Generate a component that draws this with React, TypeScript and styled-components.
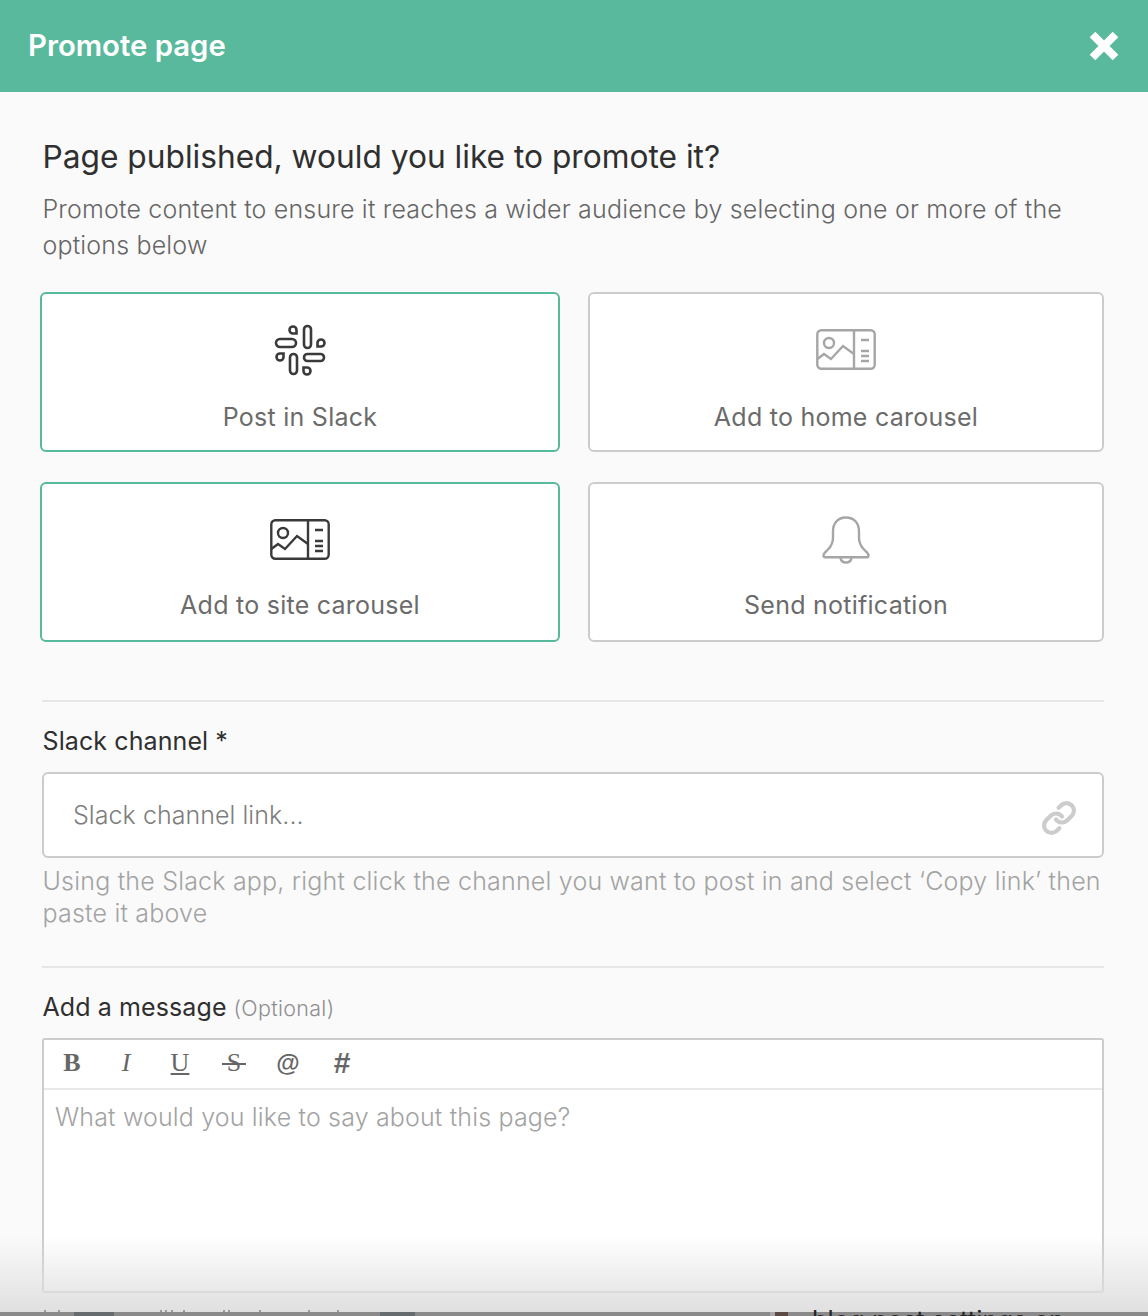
import React from 'react'
import styled, { createGlobalStyle } from 'styled-components'
import { Link } from 'lucide-react'

const GlobalStyle = createGlobalStyle`
	* {
		box-sizing: border-box;
	}

	html,
	body {
		margin: 0;
		padding: 0;
		background: #fafafa;
		font-family: Inter, 'Noto Sans', sans-serif;
	}
`

const theme = {
	green: '#59b99c',
	border: '#cccccc',
	textDark: '#2f2f2f',
	textMid: '#666666',
	textLight: '#a3a3a3',
}

// CSS

const Modal = styled.div`
	position: relative;
	width: 1148px;
	height: 1316px;
	overflow: hidden;
	background: #fafafa;
`

const Header = styled.header`
	height: 92px;
	background: ${theme.green};
	display: flex;
	align-items: center;
	justify-content: space-between;
	padding: 0 29px 0 28px;
`

const HeaderTitle = styled.h1`
	margin: 0 0 1px;
	font-size: 29.3px;
	font-weight: 600;
	color: #fff;
`

const CloseButton = styled.button`
	display: flex;
	padding: 0;
	border: 0;
	background: none;
`

const Body = styled.div`
	padding: 45px 44px 0 42px;
`

const Heading = styled.h2`
	margin: 0;
	padding-left: 0.5px;
	font-size: 31.7px;
	line-height: 40px;
	font-weight: 400;
	color: ${theme.textDark};
`

const Intro = styled.p`
	margin: 14px 0 29px;
	padding-left: 0.5px;
	font-size: 25px;
	line-height: 36px;
	font-weight: 300;
	letter-spacing: 0.17px;
	color: ${theme.textMid};
`

const OptionGrid = styled.div`
	display: grid;
	grid-template-columns: 520px 516px;
	grid-auto-rows: 160px;
	gap: 30px 28px;
	margin-left: -2px;
`

const Option = styled.div<{ $selected?: boolean }>`
	display: flex;
	flex-direction: column;
	align-items: center;
	background: #fff;
	border: 2px solid ${(p) => (p.$selected ? theme.green : theme.border)};
	border-radius: 6px;
	padding-top: 26px;
	color: ${(p) => (p.$selected ? '#3a3a3a' : '#a6a6a6')};
`

const OptionIcon = styled.div`
	height: 60px;
	display: flex;
	align-items: center;
	justify-content: center;
`

const OptionLabel = styled.span<{ $gap: number }>`
	margin-top: ${(p) => p.$gap}px;
	font-size: 25px;
	line-height: 36px;
	font-weight: 400;
	letter-spacing: 0.25px;
	color: #6b6b6b;
`

const Divider = styled.hr<{ $top: number }>`
	margin: ${(p) => p.$top}px 0 0;
	border: 0;
	border-top: 2px solid #e6e6e6;
`

const FieldLabel = styled.div`
	margin-top: 21px;
	padding-left: 0.5px;
	font-size: 25px;
	line-height: 36px;
	font-weight: 400;
	letter-spacing: 0.1px;
	color: ${theme.textDark};
`

const Optional = styled.span`
	margin-left: 7px;
	font-size: 21.5px;
	font-weight: 300;
	letter-spacing: 0.3px;
	color: #8f8f8f;
`

const InputBox = styled.div`
	margin-top: 13px;
	height: 86px;
	display: flex;
	align-items: center;
	justify-content: space-between;
	padding: 0 25px 0 29px;
	background: #fff;
	border: 2px solid ${theme.border};
	border-radius: 6px;
`

const LinkIcon = styled(Link)`
	margin-top: 6px;
	color: #cccccc;
`

const Placeholder = styled.span`
	font-size: 25px;
	font-weight: 300;
	letter-spacing: 0.05px;
	color: #7d7d7d;
`

const Hint = styled.p`
	margin: 7px 0 0;
	padding-left: 0.5px;
	font-size: 25px;
	line-height: 32px;
	font-weight: 300;
	letter-spacing: 0.2px;
	color: ${theme.textLight};
`

const Editor = styled.div`
	margin-top: 12px;
	height: 255px;
	background: #fff;
	border: 2px solid ${theme.border};
	border-radius: 3px;
`

const Toolbar = styled.div`
	height: 50px;
	display: flex;
	align-items: center;
	gap: 36px;
	padding: 0 0 2px 19px;
	border-bottom: 2px solid #e8e8e8;
`

const ToolButton = styled.span<{ $italic?: boolean; $bold?: boolean; $under?: boolean; $sans?: boolean; $size?: number }>`
	position: relative;
	width: 18px;
	display: flex;
	justify-content: center;
	font-family: ${(p) => (p.$sans ? "'Liberation Sans', sans-serif" : "'Liberation Serif', serif")};
	font-size: ${(p) => p.$size ?? 26}px;
	line-height: 30px;
	color: #666666;
	font-weight: ${(p) => (p.$bold ? 700 : 400)};
	font-style: ${(p) => (p.$italic ? 'italic' : 'normal')};
	text-decoration: ${(p) => (p.$under ? 'underline' : 'none')};
`

// the strike runs wider than the glyph, so text-decoration can't do it
const StrikeLine = styled.span`
	position: absolute;
	left: -3px;
	right: -3px;
	top: 15px;
	height: 2px;
	background: #666666;
`

const EditorText = styled.div`
	padding: 10px 11px;
	font-size: 25px;
	line-height: 34px;
	font-weight: 300;
	letter-spacing: 0.16px;
	color: ${theme.textLight};
`

const BottomFade = styled.div`
	position: absolute;
	left: 0;
	right: 0;
	bottom: 4px;
	height: 76px;
	background: linear-gradient(to bottom, rgba(224, 224, 224, 0), rgba(224, 224, 224, 1));
`

const PageBehind = styled.div`
	position: absolute;
	left: 0;
	right: 0;
	bottom: 0;
	height: 4px;
	background: #8a8a8a;
`

const BehindPatch = styled.span<{ $x: number; $w: number; $c: string }>`
	position: absolute;
	left: ${(p) => p.$x}px;
	top: 0;
	bottom: 0;
	width: ${(p) => p.$w}px;
	background: ${(p) => p.$c};
`

const BehindTick = styled.span<{ $x: number }>`
	position: absolute;
	left: ${(p) => p.$x}px;
	top: -2px;
	width: 2px;
	height: 2px;
	background: #9a9a9a;
`

const BehindText = styled.div`
	position: absolute;
	left: 812px;
	top: -2px;
	height: 6px;
	overflow: hidden;
	white-space: nowrap;
	font-size: 25.5px;
	line-height: 30px;
	color: #262626;

	span {
		display: block;
		margin-top: -5px;
	}
`

// ICONS

const SlackIcon = () => (
	<svg width='52' height='52' viewBox='0 0 52 52' fill='none' stroke='currentColor' strokeWidth='2.6'>
		<rect x='30' y='2' width='7' height='22' rx='3.5' />
		<rect x='2' y='15' width='20' height='8' rx='4' />
		<rect x='30' y='30' width='20' height='7' rx='3.5' />
		<rect x='16' y='30' width='7' height='20' rx='3.5' />
		<path d='M19 2.5a3.5 3.5 0 1 0 0 7h3.5v-3.5a3.5 3.5 0 0 0-3.5-3.5z' />
		<path d='M50.5 19a3.5 3.5 0 1 0-7 0v3.5h3.5a3.5 3.5 0 0 0 3.5-3.5z' />
		<path d='M2.5 33a3.5 3.5 0 1 0 7 0v-3.5h-3.5a3.5 3.5 0 0 0-3.5 3.5z' />
		<path d='M33 50.5a3.5 3.5 0 1 0 0-7h-3.500v3.5a3.5 3.5 0 0 0 3.5 3.5z' />
	</svg>
)

const CarouselIcon = () => (
	<svg width='60' height='42' viewBox='0 0 60 42' fill='none' stroke='currentColor' strokeWidth='2.4'>
		<rect x='1.3' y='1.3' width='57.4' height='38.4' rx='4' />
		<path d='M38 1.3v38.4' />
		<circle cx='13' cy='14' r='5' />
		<path d='M1.3 30l6.700-5 7 5 12-13 11 8' />
		<path d='M45 11h8M45 22h8M45 27h8M45 32h8' />
	</svg>
)

const BellIcon = () => (
	<svg width='50' height='50' viewBox='0 0 50 50' fill='none' stroke='currentColor' strokeWidth='2.4'>
		<path d='M25 2.500c-8.500 0-13 6-13 14v6c0 6-2 9-5 12-2 2-4.500 3.500-4.500 6 0 1 .7 1.700 1.700 1.700h41.600c1 0 1.700-.7 1.700-1.700 0-2.500-2.500-4-4.500-6-3-3-5-6-5-12v-6c0-8-4.500-14-13-14z' />
		<path d='M19.500 43c.5 3 2.500 4.500 5.500 4.500s5-1.500 5.500-4.500' />
	</svg>
)

const CloseIcon = () => (
	<svg width='30' height='30' viewBox='0 0 30 30' fill='none' stroke='#fff' strokeWidth='8'>
		<path d='M3.500 3.500l23 23M26.500 3.500l-23 23' />
	</svg>
)

const tickPositions = [44, 58, 160, 165, 171, 183, 223, 228, 259, 308, 337]

// COMPONENT

export default function App() {
	return (
		<Modal>
			<GlobalStyle />
			<Header>
				<HeaderTitle>Promote page</HeaderTitle>
				<CloseButton>
					<CloseIcon />
				</CloseButton>
			</Header>
			<Body>
				<Heading>Page published, would you like to promote it?</Heading>
				<Intro>
					Promote content to ensure it reaches a wider audience by selecting one or more of the options below
				</Intro>
				<OptionGrid>
					<Option $selected>
						<OptionIcon>
							<SlackIcon />
						</OptionIcon>
						<OptionLabel $gap={19}>Post in Slack</OptionLabel>
					</Option>
					<Option>
						<OptionIcon>
							<CarouselIcon />
						</OptionIcon>
						<OptionLabel $gap={19}>Add to home carousel</OptionLabel>
					</Option>
					<Option $selected>
						<OptionIcon>
							<CarouselIcon />
						</OptionIcon>
						<OptionLabel $gap={17}>Add to site carousel</OptionLabel>
					</Option>
					<Option>
						<OptionIcon>
							<BellIcon />
						</OptionIcon>
						<OptionLabel $gap={17}>Send notification</OptionLabel>
					</Option>
				</OptionGrid>
				<Divider $top={58} />
				<FieldLabel>Slack channel *</FieldLabel>
				<InputBox>
					<Placeholder>Slack channel link...</Placeholder>
					<LinkIcon size={36} strokeWidth={2.8} />
				</InputBox>
				<Hint>Using the Slack app, right click the channel you want to post in and select ‘Copy link’ then paste it above</Hint>
				<Divider $top={37} />
				<FieldLabel>
					Add a message<Optional>(Optional)</Optional>
				</FieldLabel>
				<Editor>
					<Toolbar>
						<ToolButton $bold>B</ToolButton>
						<ToolButton $italic>I</ToolButton>
						<ToolButton $under>U</ToolButton>
						<ToolButton>
							S
							<StrikeLine />
						</ToolButton>
						<ToolButton $sans $bold $size={24}>@</ToolButton>
						<ToolButton $sans $bold $size={30}>#</ToolButton>
					</Toolbar>
					<EditorText>What would you like to say about this page?</EditorText>
				</Editor>
			</Body>
			<BottomFade />
			<PageBehind>
				<BehindPatch $x={74} $w={40} $c='#666b6d' />
				<BehindPatch $x={380} $w={35} $c='#666b6d' />
				<BehindPatch $x={770} $w={5} $c='#a8a8a8' />
				<BehindPatch $x={775} $w={13} $c='#5e4a44' />
				{tickPositions.map((x) => (
					<BehindTick key={x} $x={x} />
				))}
				<BehindText>
					<span>blog post settings on</span>
				</BehindText>
			</PageBehind>
		</Modal>
	)
}
